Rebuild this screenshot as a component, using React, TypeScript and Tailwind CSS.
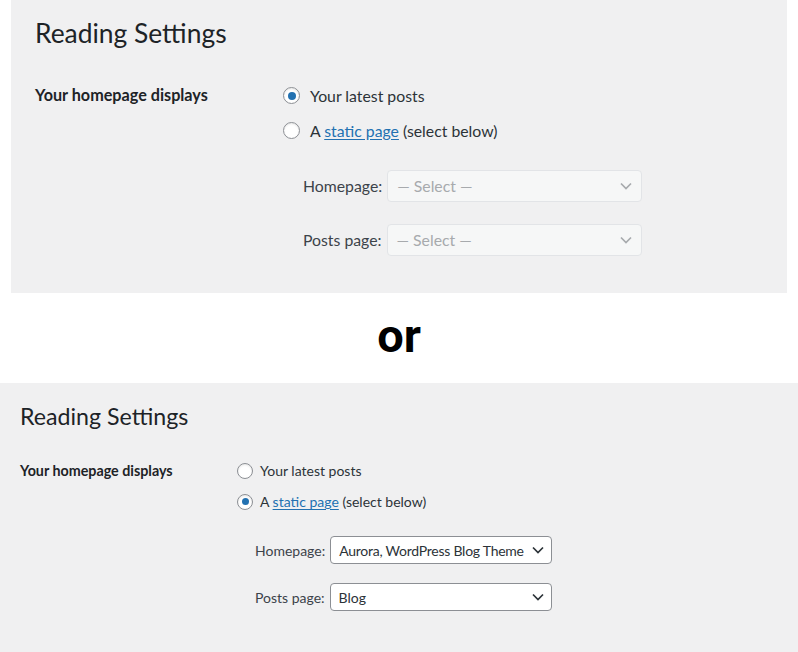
const sans = "font-['Lato','Noto_Sans',sans-serif]"

function Radio({ checked, size }: { checked: boolean; size: "lg" | "sm" }) {
  const box = size === "lg" ? "w-[17px] h-[17px]" : "w-[16px] h-[16px]"
  const dot = size === "lg" ? "w-[8px] h-[8px]" : "w-[7px] h-[7px]"
  return (
    <span
      className={`${box} shrink-0 rounded-full border border-[#8c8f94] bg-white flex items-center justify-center shadow-[inset_0_1px_2px_rgba(0,0,0,0.1)]`}
    >
      {checked && <span className={`${dot} rounded-full bg-[#2271b1]`} />}
    </span>
  )
}

function Chevron({ color }: { color: string }) {
  return (
    <svg width="14" height="14" viewBox="0 0 14 14" fill="none">
      <polyline points="2,4.5 7,9.5 12,4.5" stroke={color} strokeWidth="1.7" />
    </svg>
  )
}

function TopPanel() {
  return (
    <div className={`mx-[11px] h-[293px] bg-[#f0f0f1] pl-[24px] text-[#1d2327] ${sans}`}>
      <div className="pt-[17px] h-[48px] text-[26.4px] leading-[32px]">Reading Settings</div>
      <div className="mt-[30px] flex">
        <div className="w-[248px] h-[35px] flex items-center text-[16.2px] font-bold">Your homepage displays</div>
        <div className="flex flex-col">
          <label className="h-[35px] flex items-center gap-[10px] text-[15.8px] text-[#2c3338]">
            <Radio checked size="lg" />
            Your latest posts
          </label>
          <label className="h-[35px] flex items-center gap-[10px] text-[15.8px] text-[#2c3338]">
            <Radio checked={false} size="lg" />
            <span>
              A <span className="text-[#2271b1] underline underline-offset-2">static page</span> (select below)
            </span>
          </label>
          <div className="mt-[22px] ml-[20px] flex items-center gap-[5px] text-[15.8px] text-[#3c434a]">
            <span>Homepage:</span>
            <div className="w-[255px] h-[32px] rounded-[4px] border border-[#e2e4e7] bg-[#f6f7f7] pl-[9px] pr-[8px] flex items-center justify-between text-[#a7aaad]">
              <span>— Select —</span>
              <Chevron color="#a7aaad" />
            </div>
          </div>
          <div className="mt-[22px] ml-[20px] flex items-center gap-[5px] text-[15.8px] text-[#3c434a]">
            <span>Posts page:</span>
            <div className="w-[255px] h-[32px] rounded-[4px] border border-[#e2e4e7] bg-[#f6f7f7] pl-[9px] pr-[8px] flex items-center justify-between text-[#a7aaad]">
              <span>— Select —</span>
              <Chevron color="#a7aaad" />
            </div>
          </div>
        </div>
      </div>
    </div>
  )
}

function BottomPanel() {
  return (
    <div className={`h-[269px] bg-[#f0f0f1] pl-[20px] text-[#1d2327] ${sans}`}>
      <div className="pt-[19px] h-[47px] text-[23.2px] leading-[28px]">Reading Settings</div>
      <div className="mt-[25px] flex">
        <div className="w-[217px] h-[31px] flex items-center text-[14.3px] font-bold">Your homepage displays</div>
        <div className="flex flex-col">
          <label className="h-[31px] flex items-center gap-[7px] text-[14px] text-[#2c3338]">
            <Radio checked={false} size="sm" />
            Your latest posts
          </label>
          <label className="h-[31px] flex items-center gap-[7px] text-[14px] text-[#2c3338]">
            <Radio checked size="sm" />
            <span>
              A <span className="text-[#2271b1] underline underline-offset-2">static page</span> (select below)
            </span>
          </label>
          <div className="mt-[19px] ml-[18px] flex items-center gap-[5px] text-[14px] text-[#3c434a]">
            <span>Homepage:</span>
            <div className="w-[222px] h-[28px] rounded-[4px] border border-[#8c8f94] bg-white pl-[8px] pr-[6px] flex items-center justify-between gap-[3px] text-[#2c3338]">
              <span className="whitespace-nowrap tracking-[-0.25px]">Aurora, WordPress Blog Theme</span>
              <Chevron color="#2c3338" />
            </div>
          </div>
          <div className="mt-[19px] ml-[18px] flex items-center gap-[5px] text-[14px] text-[#3c434a]">
            <span>Posts page:</span>
            <div className="w-[222px] h-[28px] rounded-[4px] border border-[#8c8f94] bg-white pl-[8px] pr-[6px] flex items-center justify-between text-[#2c3338]">
              <span>Blog</span>
              <Chevron color="#2c3338" />
            </div>
          </div>
        </div>
      </div>
    </div>
  )
}

export default function App() {
  return (
    <div className="w-[798px] h-[652px] bg-white overflow-hidden">
      <TopPanel />
      <div className="h-[90px] flex items-center justify-center pb-[6px]">
        <span className="font-['Roboto','Liberation_Sans',sans-serif] font-bold text-[47px] leading-none text-black">
          or
        </span>
      </div>
      <BottomPanel />
    </div>
  )
}
